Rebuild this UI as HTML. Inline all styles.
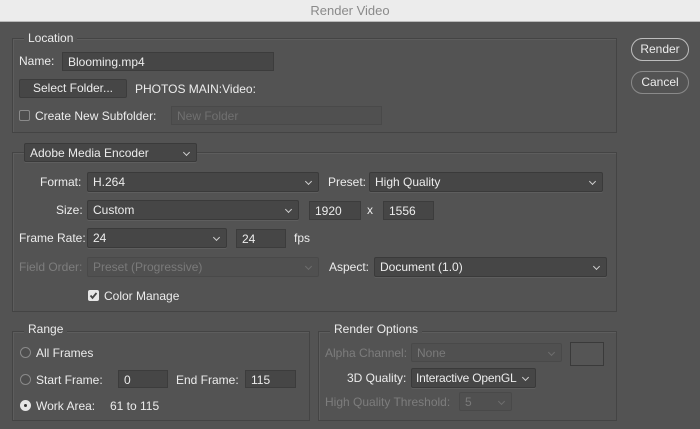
<!DOCTYPE html>
<html><head><style>
*{box-sizing:border-box;margin:0;padding:0}
body{width:700px;height:429px;background:#535353;font-family:"Liberation Sans",sans-serif;font-size:12px;color:#ececec;position:relative;overflow:hidden}
.a{position:absolute;white-space:nowrap}
.t{position:absolute;white-space:nowrap;line-height:14px}
.dim{color:#7d7d7d}
.in{position:absolute;background:#464646;border:1px solid #3c3c3c;line-height:18px;padding-left:5px;white-space:nowrap}
.sel{position:absolute;background:#464646;border:1px solid #3a3a3a;border-radius:2px;line-height:18px;padding-left:5px;white-space:nowrap;box-shadow:0 1px 0 #5e5e5e}
.sel:after{content:"";position:absolute;right:7px;top:6px;width:4px;height:4px;border-right:1px solid #cfcfcf;border-bottom:1px solid #cfcfcf;transform:rotate(45deg)}
.sel.d{background:#505050;border-color:#494949;color:#7a7a7a;box-shadow:none}
.sel.d:after{border-color:#6e6e6e}
.in.d{background:#505050;border-color:#494949;color:#707070}
.grp{position:absolute;border:1px solid #444;box-shadow:1px 1px 0 #5d5d5d inset}
.gl{position:absolute;background:#535353;padding:0 4px;line-height:14px}
.rb{position:absolute;width:11px;height:11px;border:1px solid #8a8a8a;border-radius:50%;background:#4e4e4e}
.btn{position:absolute;border:1px solid #bdbdbd;border-radius:12px;text-align:center;line-height:21px;font-size:12px}
</style></head><body>
<div class="a" style="left:0;top:0;width:700px;height:22px;background:#ececec;border-bottom:1px solid #b8b8b8;text-align:center;line-height:22px;color:#8a8a8a;font-size:13px">Render Video</div>

<div class="grp" style="left:12px;top:38px;width:605px;height:95px"></div>
<div class="gl" style="left:24px;top:31px">Location</div>
<div class="t" style="left:19px;top:54px">Name:</div>
<div class="in" style="left:62px;top:52px;width:212px;height:19px">Blooming.mp4</div>
<div class="a" style="left:19px;top:79px;width:108px;height:19px;background:#464646;border:1px solid #3c3c3c;border-radius:2px;text-align:center;line-height:17px">Select Folder...</div>
<div class="t" style="left:135px;top:82px">PHOTOS MAIN:Video:</div>
<div class="a" style="left:19px;top:110px;width:11px;height:11px;border:1px solid #8a8a8a;border-radius:2px;background:#4e4e4e"></div>
<div class="t" style="left:35px;top:109px">Create New Subfolder:</div>
<div class="in d" style="left:171px;top:106px;width:211px;height:19px">New Folder</div>

<div class="grp" style="left:12px;top:152px;width:605px;height:160px"></div>
<div class="sel" style="left:24px;top:143px;width:173px;height:19px">Adobe Media Encoder</div>
<div class="t" style="left:40px;top:175px">Format:</div>
<div class="sel" style="left:87px;top:172px;width:232px;height:20px">H.264</div>
<div class="t" style="left:328px;top:175px">Preset:</div>
<div class="sel" style="left:369px;top:172px;width:234px;height:20px">High Quality</div>
<div class="t" style="left:56px;top:203px">Size:</div>
<div class="sel" style="left:87px;top:200px;width:212px;height:20px">Custom</div>
<div class="in" style="left:309px;top:201px;width:52px;height:19px">1920</div>
<div class="t" style="left:367px;top:203px">x</div>
<div class="in" style="left:383px;top:201px;width:51px;height:19px">1556</div>
<div class="t" style="left:19px;top:231px">Frame Rate:</div>
<div class="sel" style="left:87px;top:228px;width:140px;height:20px">24</div>
<div class="in" style="left:236px;top:229px;width:50px;height:19px">24</div>
<div class="t" style="left:294px;top:231px">fps</div>
<div class="t dim" style="left:19px;top:260px">Field Order:</div>
<div class="sel d" style="left:87px;top:257px;width:232px;height:20px">Preset (Progressive)</div>
<div class="t" style="left:329px;top:260px">Aspect:</div>
<div class="sel" style="left:374px;top:257px;width:233px;height:20px">Document (1.0)</div>
<div class="a" style="left:88px;top:290px;width:11px;height:11px;background:#e6e6e6;border-radius:2px"><svg width="11" height="11" style="position:absolute;left:0;top:0"><path d="M2.5 5.5 L4.5 7.8 L8.5 3" stroke="#444" stroke-width="1.8" fill="none"/></svg></div>
<div class="t" style="left:104px;top:289px">Color Manage</div>

<div class="grp" style="left:12px;top:331px;width:298px;height:90px"></div>
<div class="gl" style="left:24px;top:322px">Range</div>
<div class="rb" style="left:20px;top:347px"></div><div class="t" style="left:36px;top:346px">All Frames</div>
<div class="rb" style="left:20px;top:374px"></div><div class="t" style="left:36px;top:373px">Start Frame:</div>
<div class="in" style="left:118px;top:370px;width:50px;height:18px">0</div>
<div class="t" style="left:176px;top:373px">End Frame:</div>
<div class="in" style="left:245px;top:370px;width:51px;height:18px">115</div>
<div class="rb" style="left:20px;top:400px;background:#e6e6e6;border-color:#e6e6e6"><div style="position:absolute;left:3px;top:3px;width:3px;height:3px;border-radius:50%;background:#333"></div></div>
<div class="t" style="left:36px;top:399px">Work Area:</div>
<div class="t" style="left:110px;top:399px">61 to 115</div>

<div class="grp" style="left:318px;top:331px;width:299px;height:90px"></div>
<div class="gl" style="left:330px;top:322px">Render Options</div>
<div class="t dim" style="left:325px;top:346px">Alpha Channel:</div>
<div class="sel d" style="left:411px;top:343px;width:151px;height:19px">None</div>
<div class="a" style="left:570px;top:342px;width:34px;height:24px;border:1px solid #3a3a3a;background:#555"></div>
<div class="t" style="left:347px;top:371px">3D Quality:</div>
<div class="sel" style="left:411px;top:368px;width:125px;height:20px;padding-left:4px;letter-spacing:-0.2px">Interactive OpenGL</div>
<div class="t dim" style="left:325px;top:395px">High Quality Threshold:</div>
<div class="sel d" style="left:459px;top:392px;width:53px;height:19px">5</div>

<div class="btn" style="left:631px;top:38px;width:58px;height:23px">Render</div>
<div class="btn" style="left:631px;top:71px;width:58px;height:23px;border-color:#8a8a8a">Cancel</div>
</body></html>
